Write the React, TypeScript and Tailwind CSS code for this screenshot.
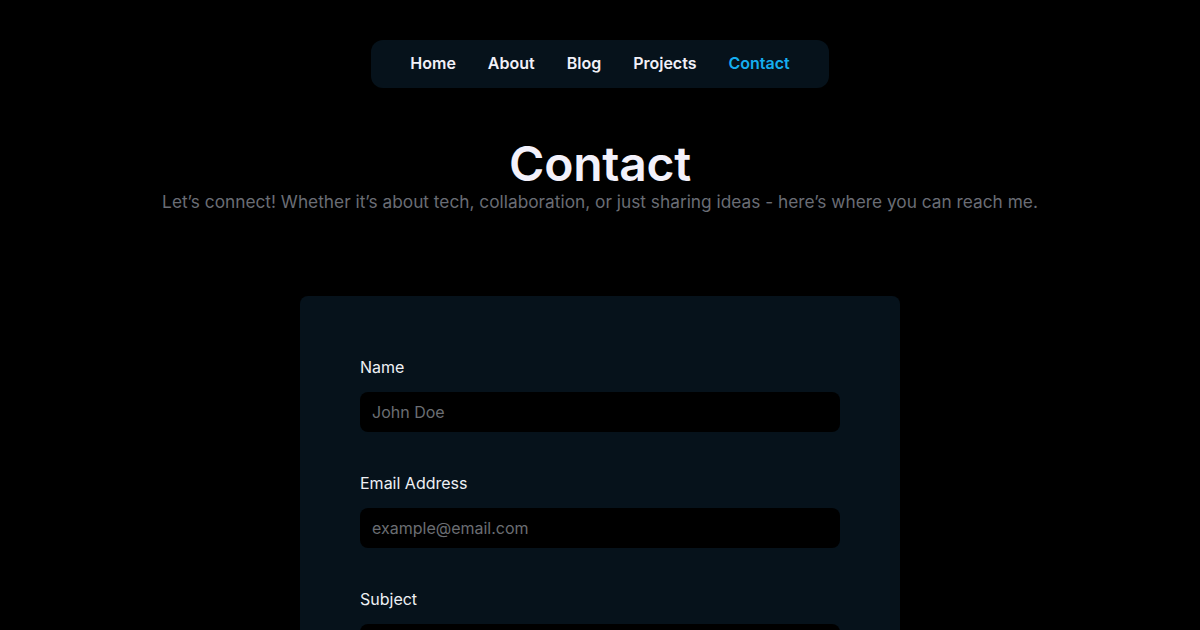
import React from "react";

export default function App() {
  const links = ["Home", "About", "Blog", "Projects", "Contact"];
  return (
    <div className="min-h-[630px] w-full bg-black text-white" style={{ fontFamily: "Inter, 'Noto Sans', sans-serif" }}>
      <div className="flex justify-center pt-10">
        <nav className="flex h-12 w-[458px] items-center justify-center gap-8 rounded-xl bg-[#06121b] pb-0.5">
          {links.map((l) => (
            <span key={l} className={`text-base font-semibold leading-5 ${l === "Contact" ? "text-[#15aef0]" : "text-[#f1f0f8]"}`}>
              {l}
            </span>
          ))}
        </nav>
      </div>
      <div className="mt-[50px] flex flex-col items-center">
        <h1 className="text-5xl font-semibold leading-[52px] tracking-[-0.005em] text-[#f3f1fb]">Contact</h1>
        <p className="text-[17.3px] leading-6 text-[#6a6d75]">
          Let’s connect! Whether it’s about tech, collaboration, or just sharing ideas - here’s where you can reach me.
        </p>
      </div>
      <div className="mt-[82px] flex justify-center">
        <div className="flex w-[600px] flex-col gap-[41px] rounded-lg bg-[#06121b] px-[60px] pb-10 pt-[61px]">
          {[
            ["Name", "John Doe"],
            ["Email Address", "example@email.com"],
            ["Subject", ""],
          ].map(([label, ph]) => (
            <div key={label} className="flex flex-col gap-[15px]">
              <label className="text-base leading-5 text-[#eef0f4]">{label}</label>
              <div className="flex h-10 items-center rounded-lg bg-black px-3 text-base text-[#6b6e73]">{ph}</div>
            </div>
          ))}
        </div>
      </div>
    </div>
  );
}
